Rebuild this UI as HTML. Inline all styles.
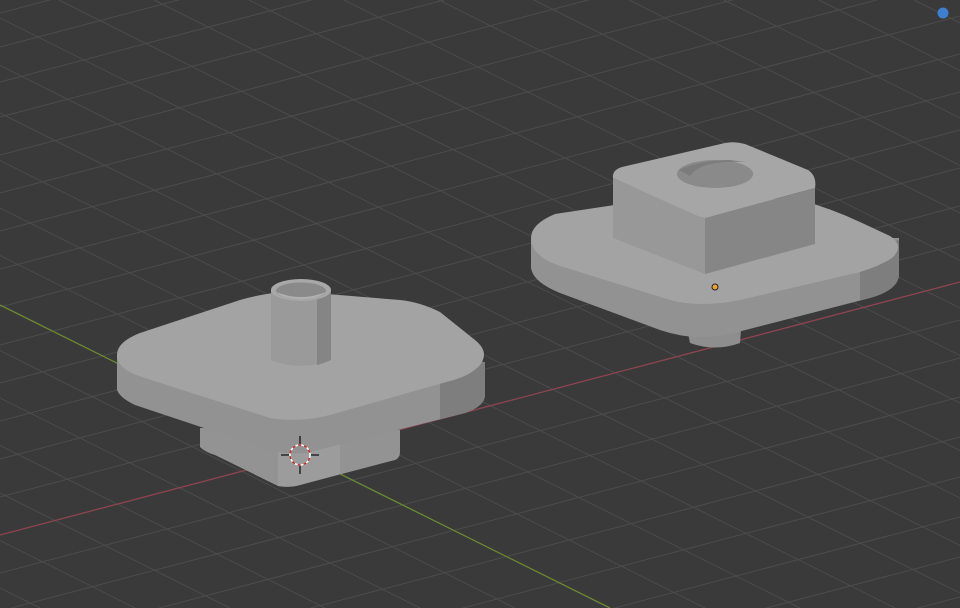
<!DOCTYPE html>
<html><head><meta charset="utf-8"><style>html,body{margin:0;padding:0;background:#3a3a3a;overflow:hidden;width:960px;height:608px}svg{display:block}</style></head><body>
<svg width="960" height="608" viewBox="0 0 960 608" xmlns="http://www.w3.org/2000/svg">
<rect width="960" height="608" fill="#3a3a3a"/>
<g stroke="#4c4c4c" stroke-width="1" fill="none">
<path d="M-1176 0L40 608M-1081 0L135 608M-986 0L230 608M-891 0L325 608M-796 0L420 608M-701 0L515 608M-511 0L705 608M-416 0L800 608M-321 0L895 608M-226 0L990 608M-131 0L1085 608M-36 0L1180 608M59 0L1275 608M154 0L1370 608M249 0L1465 608M344 0L1560 608M439 0L1655 608M534 0L1750 608M629 0L1845 608M724 0L1940 608M819 0L2035 608M914 0L2130 608"/>
<path d="M0 -92L960 -345M0 -57L960 -310M0 -22L960 -275M0 13L960 -240M0 47L960 -206M0 82L960 -171M0 117L960 -136M0 155L960 -98M0 193L960 -60M0 231L960 -22M0 269L960 16M0 307L960 54M0 345L960 92M0 383L960 130M0 421L960 168M0 459L960 206M0 497L960 244M0 573L960 320M0 611L960 358M0 650L960 397M0 690L960 437M0 730L960 477M0 770L960 517M0 810L960 557M0 850L960 597M0 890L960 637M0 930L960 677"/>
</g>
<path d="M0 535L960 282" stroke="#8e4450" stroke-width="1.3"/>
<path d="M0 305L610 608" stroke="#6a8a34" stroke-width="1.3"/>

<!-- left object -->
<path d="M200 428 L200 447 Q205 452 215 455 L278 486 Q290 488 300 485 L395 460 Q400 458 400 452 L400 430 Z" fill="#939393"/>
<path d="M278 420 L278 486 Q290 488 300 485 L340 474 L340 415 Z" fill="#9c9c9c"/>
<path d="M117 355 L117 390 Q120 398 135 405 L270 450 Q290 456 310 452 L465 413 Q485 406 485 395 L485 362 Z" fill="#929292"/>
<path d="M440 360 L485 362 L485 395 Q485 406 465 413 L440 419 Z" fill="#7e7e7e"/>
<path d="M117 355 Q117 342 140 333 L240 300 Q260 294 290 291 L400 300 Q420 302 440 312 L475 340 Q490 352 480 365 Q470 376 450 381 L330 415 Q300 423 270 418 L145 378 Q117 370 117 355 Z" fill="#a3a3a3"/>
<path d="M271 290 L271 360 Q301 372 331 360 L331 290 Z" fill="#9a9a9a"/>
<path d="M317 290 L331 290 L331 360 Q325 363 317 365 Z" fill="#858585"/>
<ellipse cx="301" cy="290" rx="30" ry="11" fill="#a8a8a8"/>
<ellipse cx="301" cy="291" rx="25" ry="8.5" fill="#8a8a8a"/>
<path d="M276 292 Q301 302 326 292 Q320 299 301 299.5 Q282 299 276 292Z" fill="#b0b0b0"/>
<circle cx="300" cy="455" r="10" fill="none" stroke="#fff" stroke-width="1.5" stroke-dasharray="3 3"/>
<circle cx="300" cy="455" r="10" fill="none" stroke="#c83030" stroke-width="1.5" stroke-dasharray="3 3" stroke-dashoffset="3"/>
<path d="M300 436v8M300 466v8M281 455h8M311 455h8" stroke="#111" stroke-width="1.3"/>

<!-- right object -->
<path d="M688 333 L690 343 Q715 352 740 343 L741 330 Z" fill="#8e8e8e"/>
<path d="M531 238 L531 268 Q533 282 560 293 L660 330 Q695 342 730 334 L870 298 Q898 290 899 275 L899 238 Z" fill="#929292"/>
<path d="M860 250 L899 240 L899 275 Q898 290 870 298 L860 300 Z" fill="#7e7e7e"/>
<path d="M531 238 Q531 224 555 214 L680 195 L800 200 Q830 208 860 222 L890 236 Q905 246 892 258 Q880 266 860 272 L740 300 Q700 308 670 300 L560 266 Q531 256 531 238 Z" fill="#a3a3a3"/>
<path d="M613 178 L613 238 L705 274 L705 218 Z" fill="#989898"/>
<path d="M705 218 L705 274 L815 244 L815 188 Z" fill="#868686"/>
<path d="M613 178 Q612 170 622 167 L725 143 Q735 141 745 144 L808 170 Q817 176 815 188 L712 216 Q705 219 698 216 Z" fill="#a6a6a6"/>
<ellipse cx="715" cy="174" rx="38" ry="14" fill="#8a8a8a"/>
<path d="M679 170 Q700 160 730 160 L745 162 Q700 160 690 176 Z" fill="#7c7c7c"/>
<circle cx="715" cy="287" r="3" fill="#f0a030" stroke="#222" stroke-width="1"/>

<circle cx="943" cy="13" r="5.5" fill="#3f7fd0"/>
</svg>
</body></html>
